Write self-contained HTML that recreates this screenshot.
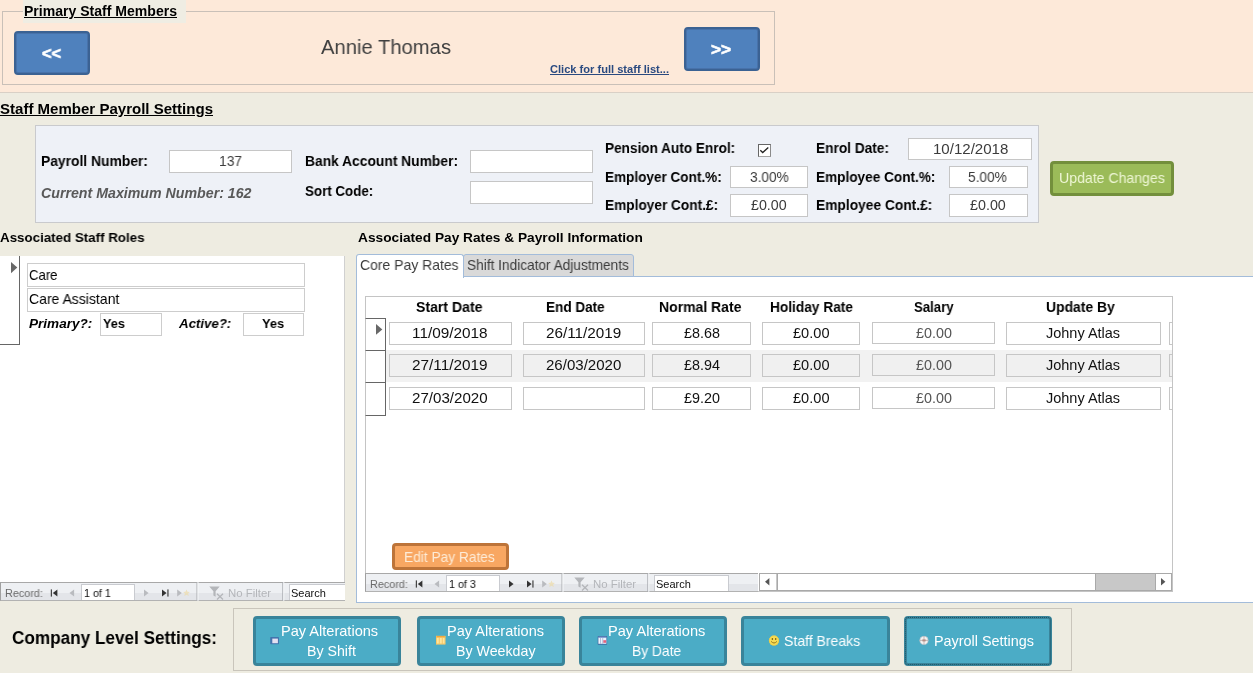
<!DOCTYPE html>
<html><head><meta charset="utf-8"><title>Payroll</title>
<style>
html,body{margin:0;padding:0;}
body{width:1253px;height:673px;overflow:hidden;background:#eeece1;position:relative;font-family:"Liberation Sans", sans-serif;}
.b{position:absolute;box-sizing:border-box;}
.t{position:absolute;white-space:pre;transform-origin:0 0;line-height:normal;font-family:"Liberation Sans", sans-serif;will-change:transform;}
svg{position:absolute;overflow:visible;}
</style></head><body>
<div class="b" style="left:0px;top:0px;width:1253px;height:92px;background:#fde9d9;"></div>
<div class="b" style="left:0px;top:92px;width:1253px;height:1px;background:#d9d0c6;"></div>
<div class="b" style="left:2px;top:11px;width:773px;height:74px;border:1px solid #c9c0b8;"></div>
<div class="b" style="left:23px;top:0px;width:163px;height:23px;background:#efede3;"></div>
<div class="b" style="left:14px;top:31px;width:76px;height:44px;background:#4f81bd;border:2px solid #3b6293;border-radius:4px;box-shadow:inset 0 0 0 1px #4872aa;"></div>
<div class="b" style="left:684px;top:27px;width:76px;height:44px;background:#4f81bd;border:2px solid #3b6293;border-radius:4px;box-shadow:inset 0 0 0 1px #4872aa;"></div>
<div class="b" style="left:35px;top:125px;width:1004px;height:98px;background:#eef1f7;border:1px solid #c9cacd;"></div>
<div class="b" style="left:169px;top:150px;width:123px;height:23px;background:#fff;border:1px solid #c6c6c6;"></div>
<div class="b" style="left:470px;top:150px;width:123px;height:23px;background:#fff;border:1px solid #c6c6c6;"></div>
<div class="b" style="left:470px;top:181px;width:123px;height:23px;background:#fff;border:1px solid #c6c6c6;"></div>
<div class="b" style="left:758px;top:144px;width:13px;height:13px;background:#fff;border:1px solid #666;border-bottom-color:#a5a5a5;border-right-color:#8a8a8a;"></div>
<svg style="left:758px;top:144px" width="13" height="13"><path d="M2.3 6.2 L4.7 8.5 L10.3 3.5" fill="none" stroke="#222" stroke-width="1.3"/></svg>
<div class="b" style="left:730px;top:166px;width:78px;height:22px;background:#fff;border:1px solid #c6c6c6;"></div>
<div class="b" style="left:730px;top:194px;width:78px;height:23px;background:#fff;border:1px solid #c6c6c6;"></div>
<div class="b" style="left:908px;top:138px;width:124px;height:22px;background:#fff;border:1px solid #c6c6c6;"></div>
<div class="b" style="left:949px;top:166px;width:79px;height:22px;background:#fff;border:1px solid #c6c6c6;"></div>
<div class="b" style="left:949px;top:194px;width:79px;height:23px;background:#fff;border:1px solid #c6c6c6;"></div>
<div class="b" style="left:1050px;top:161px;width:124px;height:35px;background:#9bbb59;border:3px solid #738f3c;border-radius:4px;"></div>
<div class="b" style="left:0px;top:256px;width:345px;height:345px;background:#fff;"></div>
<div class="b" style="left:344px;top:256px;width:1px;height:345px;background:#d0d0d0;"></div>
<div class="b" style="left:0px;top:256px;width:20px;height:89px;background:#fff;border-right:1px solid #666;border-bottom:1px solid #666;"></div>
<svg style="left:11px;top:262px" width="7" height="12"><path d="M0 0 L6.3 5.6 L0 11.2 Z" fill="#686868"/></svg>
<div class="b" style="left:27px;top:263px;width:278px;height:24px;background:#fff;border:1px solid #cdcdcd;"></div>
<div class="b" style="left:27px;top:288px;width:278px;height:24px;background:#fff;border:1px solid #cdcdcd;"></div>
<div class="b" style="left:100px;top:313px;width:62px;height:23px;background:#fff;border:1px solid #cdcdcd;"></div>
<div class="b" style="left:243px;top:313px;width:61px;height:23px;background:#fff;border:1px solid #cdcdcd;"></div>
<div class="b" style="left:0px;top:582px;width:345px;height:19px;background:#e3e5e9;border-top:1px solid #a8a8a8;border-left:1px solid #a0a0a0;border-bottom:1px solid #b2b2b2;"></div>
<div class="b" style="left:1px;top:583px;width:344px;height:10px;background:#eef0f3;"></div>
<svg style="left:0px;top:582px" width="345" height="19"><rect x="50.8" y="7.4" width="1.1" height="7.2" fill="#333"/><path d="M57.4 7.4 L52.8 11.0 L57.4 14.6 Z" fill="#333"/><path d="M74.1 7.4 L69.5 11.0 L74.1 14.6 Z" fill="#b9bbbf"/><path d="M144 7.4 L148.6 11.0 L144 14.6 Z" fill="#b9bbbf"/><path d="M162 7.4 L166.6 11.0 L162 14.6 Z" fill="#333"/><rect x="167.4" y="7.4" width="1.1" height="7.2" fill="#333"/><path d="M177.2 7.4 L181.79999999999998 11.0 L177.2 14.6 Z" fill="#b9bbbf"/><path d="M186.5 7.5 l1 2.3 2.4 .2 -1.8 1.6 .6 2.4 -2.2 -1.3 -2.2 1.3 .6 -2.4 -1.8 -1.6 2.4 -.2z" fill="#ecdcae" opacity=".75"/><rect x="196.5" y="0" width="1" height="19" fill="#a9abb0"/><rect x="197.5" y="0" width="1" height="19" fill="#f6f7f9"/><rect x="282.3" y="0" width="1" height="19" fill="#a9abb0"/><rect x="283.3" y="0" width="1" height="19" fill="#f6f7f9"/><path d="M209.3 4.6 h10.4 l-4.1 4.6 v5.6 l-2.2 -1.4 v-4.2 z" fill="#b4b6ba"/><path d="M217 11.8 l6 5.6 M223 11.8 l-6 5.6" stroke="#b4b6ba" stroke-width="1.3" fill="none"/></svg>
<div class="b" style="left:81px;top:584px;width:54px;height:16px;background:#fff;border:1px solid #c9cbd0;border-bottom:none;"></div>
<div class="b" style="left:289px;top:584px;width:56px;height:16px;background:#fff;border:1px solid #c9cbd0;border-bottom:none;border-right:none;"></div>
<div class="b" style="left:356px;top:276px;width:904px;height:327px;background:#fff;border:1px solid #a3bcda;"></div>
<div class="b" style="left:463px;top:254px;width:171px;height:23px;background:#d9d9d9;border:1px solid #a3bcda;border-radius:3px 3px 0 0;"></div>
<div class="b" style="left:356px;top:254px;width:108px;height:24px;background:#fff;border:1px solid #a3bcda;border-bottom:none;border-radius:3px 3px 0 0;"></div>
<div class="b" style="left:365px;top:296px;width:808px;height:296px;background:#fff;border:1px solid #c4c4c4;"></div>
<div class="b" style="left:366px;top:350px;width:806px;height:32px;background:#f2f2f2;"></div>
<div class="b" style="left:389px;top:322px;width:123px;height:23px;background:#fff;border:1px solid #c6c6c6;"></div>
<div class="b" style="left:523px;top:322px;width:122px;height:23px;background:#fff;border:1px solid #c6c6c6;"></div>
<div class="b" style="left:652px;top:322px;width:99px;height:23px;background:#fff;border:1px solid #c6c6c6;"></div>
<div class="b" style="left:762px;top:322px;width:98px;height:23px;background:#fff;border:1px solid #c6c6c6;"></div>
<div class="b" style="left:872px;top:322px;width:123px;height:22px;background:#fff;border:1px solid #c6c6c6;"></div>
<div class="b" style="left:1006px;top:322px;width:155px;height:23px;background:#fff;border:1px solid #c6c6c6;"></div>
<div class="b" style="left:1169px;top:322px;width:3px;height:23px;background:#fff;border:1px solid #c6c6c6;border-right:none;"></div>
<div class="b" style="left:365px;top:318px;width:21px;height:33px;background:#fff;border:1px solid #666;border-left:1px solid #c4c4c4;"></div>
<div class="b" style="left:389px;top:354px;width:123px;height:23px;background:#f0f0f0;border:1px solid #c6c6c6;"></div>
<div class="b" style="left:523px;top:354px;width:122px;height:23px;background:#f0f0f0;border:1px solid #c6c6c6;"></div>
<div class="b" style="left:652px;top:354px;width:99px;height:23px;background:#f0f0f0;border:1px solid #c6c6c6;"></div>
<div class="b" style="left:762px;top:354px;width:98px;height:23px;background:#f0f0f0;border:1px solid #c6c6c6;"></div>
<div class="b" style="left:872px;top:354px;width:123px;height:22px;background:#f0f0f0;border:1px solid #c6c6c6;"></div>
<div class="b" style="left:1006px;top:354px;width:155px;height:23px;background:#f0f0f0;border:1px solid #c6c6c6;"></div>
<div class="b" style="left:1169px;top:354px;width:3px;height:23px;background:#f0f0f0;border:1px solid #c6c6c6;border-right:none;"></div>
<div class="b" style="left:365px;top:350px;width:21px;height:33px;background:#fff;border:1px solid #666;border-left:1px solid #c4c4c4;"></div>
<div class="b" style="left:389px;top:387px;width:123px;height:23px;background:#fff;border:1px solid #c6c6c6;"></div>
<div class="b" style="left:523px;top:387px;width:122px;height:23px;background:#fff;border:1px solid #c6c6c6;"></div>
<div class="b" style="left:652px;top:387px;width:99px;height:23px;background:#fff;border:1px solid #c6c6c6;"></div>
<div class="b" style="left:762px;top:387px;width:98px;height:23px;background:#fff;border:1px solid #c6c6c6;"></div>
<div class="b" style="left:872px;top:387px;width:123px;height:22px;background:#fff;border:1px solid #c6c6c6;"></div>
<div class="b" style="left:1006px;top:387px;width:155px;height:23px;background:#fff;border:1px solid #c6c6c6;"></div>
<div class="b" style="left:1169px;top:387px;width:3px;height:23px;background:#fff;border:1px solid #c6c6c6;border-right:none;"></div>
<div class="b" style="left:365px;top:382px;width:21px;height:34px;background:#fff;border:1px solid #666;border-left:1px solid #c4c4c4;"></div>
<svg style="left:376px;top:324px" width="7" height="12"><path d="M0 0 L6.3 5.4 L0 10.8 Z" fill="#686868"/></svg>
<div class="b" style="left:392px;top:543px;width:117px;height:27px;background:#f8a762;border:3px solid #bd7439;border-radius:4px;"></div>
<div class="b" style="left:365px;top:573px;width:393px;height:19px;background:#e3e5e9;border-top:1px solid #a8a8a8;border-left:1px solid #a0a0a0;border-bottom:1px solid #b2b2b2;"></div>
<div class="b" style="left:366px;top:574px;width:392px;height:10px;background:#eef0f3;"></div>
<svg style="left:365px;top:573px" width="393" height="19"><rect x="50.8" y="7.4" width="1.1" height="7.2" fill="#333"/><path d="M57.4 7.4 L52.8 11.0 L57.4 14.6 Z" fill="#333"/><path d="M74.1 7.4 L69.5 11.0 L74.1 14.6 Z" fill="#b9bbbf"/><path d="M144 7.4 L148.6 11.0 L144 14.6 Z" fill="#333"/><path d="M162 7.4 L166.6 11.0 L162 14.6 Z" fill="#333"/><rect x="167.4" y="7.4" width="1.1" height="7.2" fill="#333"/><path d="M177.2 7.4 L181.79999999999998 11.0 L177.2 14.6 Z" fill="#b9bbbf"/><path d="M186.5 7.5 l1 2.3 2.4 .2 -1.8 1.6 .6 2.4 -2.2 -1.3 -2.2 1.3 .6 -2.4 -1.8 -1.6 2.4 -.2z" fill="#ecdcae" opacity=".75"/><rect x="196.5" y="0" width="1" height="19" fill="#a9abb0"/><rect x="197.5" y="0" width="1" height="19" fill="#f6f7f9"/><rect x="282.3" y="0" width="1" height="19" fill="#a9abb0"/><rect x="283.3" y="0" width="1" height="19" fill="#f6f7f9"/><path d="M209.3 4.6 h10.4 l-4.1 4.6 v5.6 l-2.2 -1.4 v-4.2 z" fill="#b4b6ba"/><path d="M217 11.8 l6 5.6 M223 11.8 l-6 5.6" stroke="#b4b6ba" stroke-width="1.3" fill="none"/></svg>
<div class="b" style="left:446px;top:575px;width:54px;height:16px;background:#fff;border:1px solid #c9cbd0;border-bottom:none;"></div>
<div class="b" style="left:654px;top:575px;width:75px;height:16px;background:#fff;border:1px solid #c9cbd0;border-bottom:none;"></div>
<div class="b" style="left:759px;top:573px;width:413px;height:18px;background:#c8c8c8;border:1px solid #a9a9a9;"></div>
<div class="b" style="left:760px;top:574px;width:16px;height:16px;background:#fff;"></div>
<div class="b" style="left:777px;top:574px;width:319px;height:16px;background:#fff;border-left:1px solid #a9a9a9;border-right:1px solid #a9a9a9;"></div>
<div class="b" style="left:1155px;top:574px;width:16px;height:16px;background:#fff;border-left:1px solid #a9a9a9;"></div>
<svg style="left:765px;top:578px" width="6" height="10"><path d="M4.4 0 L0 3.8 L4.4 7.6 Z" fill="#555"/></svg>
<svg style="left:1161.2px;top:578px" width="6" height="10"><path d="M0 0 L4.4 3.8 L0 7.6 Z" fill="#555"/></svg>
<div class="b" style="left:233px;top:608px;width:839px;height:63px;border:1px solid #c9c5bb;"></div>
<div class="b" style="left:253px;top:616px;width:148px;height:50px;background:#4bacc6;border:3px solid #39849a;border-radius:4px;"></div>
<div class="b" style="left:417px;top:616px;width:148px;height:50px;background:#4bacc6;border:3px solid #39849a;border-radius:4px;"></div>
<div class="b" style="left:579px;top:616px;width:148px;height:50px;background:#4bacc6;border:3px solid #39849a;border-radius:4px;"></div>
<div class="b" style="left:741px;top:616px;width:149px;height:50px;background:#4bacc6;border:3px solid #39849a;border-radius:4px;"></div>
<div class="b" style="left:904px;top:616px;width:148px;height:50px;background:#4bacc6;border:3px solid #39849a;border-radius:4px;outline:1px dotted #1d5466;outline-offset:-2px;"></div>
<svg style="left:0;top:0" width="1253" height="673"><rect x="270.2" y="636.9" width="8.8" height="7.4" rx="0.8" fill="#4274ad"/><rect x="272.3" y="638.6" width="5.6" height="4.6" fill="#e4e0f1"/><rect x="436" y="635.9" width="9.3" height="8.4" fill="#ffe69c"/><rect x="436" y="635.9" width="9.3" height="1.7" fill="#f2a73a"/><rect x="436" y="643.6" width="9.3" height="0.8" fill="#f6bd55"/><rect x="436" y="635.9" width="0.7" height="8.4" fill="#f6bd55"/><rect x="444.6" y="635.9" width="0.7" height="8.4" fill="#f6bd55"/><rect x="438.8" y="637.6" width="0.9" height="6.4" fill="#f5c364"/><rect x="441.8" y="637.6" width="0.9" height="6.4" fill="#f5c364"/><rect x="597.7" y="635.9" width="9.4" height="8.8" rx="0.8" fill="#3f69a3"/><rect x="598.4" y="637.6" width="8" height="6.2" fill="#eef3fb"/><rect x="598.4" y="636.7" width="8" height="1.2" fill="#8aa3d6"/><rect x="600.2" y="638" width="0.8" height="5.8" fill="#9fb2d8"/><rect x="602.4" y="638" width="0.8" height="5.8" fill="#9fb2d8"/><rect x="603.3" y="640.2" width="2.8" height="2.6" fill="#e2627c"/><circle cx="774" cy="640.6" r="5" fill="#f6dc55"/><circle cx="774" cy="640.6" r="4.7" fill="none" stroke="#efc93a" stroke-width="0.6"/><ellipse cx="772.4" cy="639" rx="0.75" ry="1.1" fill="#7d5f10"/><ellipse cx="775.7" cy="639" rx="0.75" ry="1.1" fill="#7d5f10"/><path d="M771.1 641.4 Q774 644.6 776.9 641.4" fill="none" stroke="#8f6e14" stroke-width="0.9"/><circle cx="924" cy="640.4" r="4.3" fill="#f4f1f0"/><path d="M919.7 640.4 h8.6 M924 636.1 v8.6" stroke="#b9aaa8" stroke-width="0.8"/><circle cx="924" cy="640.4" r="4.1" fill="none" stroke="#9fb4bd" stroke-width="0.6"/><rect x="922.4" y="639.4" width="3.2" height="2" fill="#b48d84"/></svg>
<span class="t" style="left:24.00px;top:3px;font-size:14px;color:#000;transform:scaleX(1.0032);font-weight:bold;text-decoration:underline;">Primary Staff Members</span>
<span class="t" style="left:42.00px;top:44px;font-size:17px;color:#fff;transform:scaleX(0.9567);font-weight:bold;-webkit-text-stroke:0.6px #fff;">&lt;&lt;</span>
<span class="t" style="left:711.00px;top:40px;font-size:17px;color:#fff;transform:scaleX(1.0071);font-weight:bold;-webkit-text-stroke:0.6px #fff;">&gt;&gt;</span>
<span class="t" style="left:321.00px;top:36px;font-size:20.4px;color:#404040;transform:scaleX(0.9915);">Annie Thomas</span>
<span class="t" style="left:550.00px;top:63px;font-size:10.5px;color:#2a4a80;transform:scaleX(1.0568);font-weight:bold;text-decoration:underline;">Click for full staff list...</span>
<span class="t" style="left:0.00px;top:101px;font-size:14.2px;color:#000;transform:scaleX(1.0595);font-weight:bold;text-decoration:underline;">Staff Member Payroll Settings</span>
<span class="t" style="left:41.00px;top:153px;font-size:14.2px;color:#000;transform:scaleX(0.9763);font-weight:bold;">Payroll Number:</span>
<span class="t" style="left:219.00px;top:153px;font-size:14.2px;color:#3c3c3c;transform:scaleX(0.9716);">137</span>
<span class="t" style="left:41.00px;top:185px;font-size:14.2px;color:#595959;transform:scaleX(1.0000);font-weight:bold;font-style:italic;">Current Maximum Number: 162</span>
<span class="t" style="left:304.80px;top:153px;font-size:14.2px;color:#000;transform:scaleX(0.9737);font-weight:bold;">Bank Account Number:</span>
<span class="t" style="left:304.80px;top:183px;font-size:14.2px;color:#000;transform:scaleX(0.9405);font-weight:bold;">Sort Code:</span>
<span class="t" style="left:605.20px;top:140px;font-size:14.2px;color:#000;transform:scaleX(0.9586);font-weight:bold;">Pension Auto Enrol:</span>
<span class="t" style="left:605.20px;top:169px;font-size:14.2px;color:#000;transform:scaleX(0.9551);font-weight:bold;">Employer Cont.%:</span>
<span class="t" style="left:605.20px;top:197px;font-size:14.2px;color:#000;transform:scaleX(0.9628);font-weight:bold;">Employer Cont.£:</span>
<span class="t" style="left:749.50px;top:169px;font-size:14.2px;color:#3c3c3c;transform:scaleX(0.9643);">3.00%</span>
<span class="t" style="left:751.30px;top:197px;font-size:14.2px;color:#3c3c3c;transform:scaleX(1.0052);">£0.00</span>
<span class="t" style="left:816.40px;top:140px;font-size:14.2px;color:#000;transform:scaleX(0.9645);font-weight:bold;">Enrol Date:</span>
<span class="t" style="left:816.40px;top:169px;font-size:14.2px;color:#000;transform:scaleX(0.9586);font-weight:bold;">Employee Cont.%:</span>
<span class="t" style="left:816.40px;top:197px;font-size:14.2px;color:#000;transform:scaleX(0.9706);font-weight:bold;">Employee Cont.£:</span>
<span class="t" style="left:932.70px;top:141px;font-size:14.2px;color:#3c3c3c;transform:scaleX(1.0603);">10/12/2018</span>
<span class="t" style="left:968.40px;top:169px;font-size:14.2px;color:#3c3c3c;transform:scaleX(0.9668);">5.00%</span>
<span class="t" style="left:970.20px;top:197px;font-size:14.2px;color:#3c3c3c;transform:scaleX(1.0080);">£0.00</span>
<span class="t" style="left:1059.00px;top:170px;font-size:14.2px;color:#eff7d6;transform:scaleX(0.9936);">Update Changes</span>
<span class="t" style="left:0.00px;top:230px;font-size:13.4px;color:#000;transform:scaleX(0.9958);font-weight:bold;">Associated Staff Roles</span>
<span class="t" style="left:29.00px;top:267px;font-size:14.2px;color:#000;transform:scaleX(0.9264);">Care</span>
<span class="t" style="left:29.00px;top:291px;font-size:14.2px;color:#000;transform:scaleX(0.9871);">Care Assistant</span>
<span class="t" style="left:28.70px;top:316px;font-size:13.4px;color:#000;transform:scaleX(1.0125);font-weight:bold;font-style:italic;">Primary?:</span>
<span class="t" style="left:102.60px;top:316px;font-size:13.4px;color:#000;transform:scaleX(0.9440);font-weight:bold;">Yes</span>
<span class="t" style="left:179.00px;top:316px;font-size:13.4px;color:#000;transform:scaleX(0.9897);font-weight:bold;font-style:italic;">Active?:</span>
<span class="t" style="left:262.40px;top:316px;font-size:13.4px;color:#000;transform:scaleX(0.9570);font-weight:bold;">Yes</span>
<span class="t" style="left:5.20px;top:587px;font-size:11px;color:#6a6a6a;transform:scaleX(0.9836);">Record:</span>
<span class="t" style="left:83.80px;top:587px;font-size:11px;color:#111;transform:scaleX(0.9734);">1 of 1</span>
<span class="t" style="left:227.50px;top:587px;font-size:11px;color:#b4b6ba;transform:scaleX(1.0370);">No Filter</span>
<span class="t" style="left:290.70px;top:587px;font-size:11px;color:#111;transform:scaleX(0.9897);">Search</span>
<span class="t" style="left:357.80px;top:230px;font-size:13.4px;color:#000;transform:scaleX(1.0233);font-weight:bold;">Associated Pay Rates &amp; Payroll Information</span>
<span class="t" style="left:360.10px;top:257px;font-size:14.5px;color:#3c3c3c;transform:scaleX(0.9633);">Core Pay Rates</span>
<span class="t" style="left:467.00px;top:257px;font-size:14.5px;color:#3c3c3c;transform:scaleX(0.9425);">Shift Indicator Adjustments</span>
<span class="t" style="left:416.40px;top:299px;font-size:14.2px;color:#000;transform:scaleX(0.9906);font-weight:bold;">Start Date</span>
<span class="t" style="left:546.30px;top:299px;font-size:14.2px;color:#000;transform:scaleX(0.9545);font-weight:bold;">End Date</span>
<span class="t" style="left:658.70px;top:299px;font-size:14.2px;color:#000;transform:scaleX(0.9859);font-weight:bold;">Normal Rate</span>
<span class="t" style="left:769.90px;top:299px;font-size:14.2px;color:#000;transform:scaleX(0.9658);font-weight:bold;">Holiday Rate</span>
<span class="t" style="left:913.60px;top:299px;font-size:14.2px;color:#000;transform:scaleX(0.9294);font-weight:bold;">Salary</span>
<span class="t" style="left:1045.60px;top:299px;font-size:14.2px;color:#000;transform:scaleX(0.9804);font-weight:bold;">Update By</span>
<span class="t" style="left:412.40px;top:325px;font-size:14.2px;color:#111;transform:scaleX(1.0807);">11/09/2018</span>
<span class="t" style="left:546.30px;top:325px;font-size:14.2px;color:#111;transform:scaleX(1.0764);">26/11/2019</span>
<span class="t" style="left:683.70px;top:325px;font-size:14.2px;color:#111;transform:scaleX(1.0108);">£8.68</span>
<span class="t" style="left:793.20px;top:325px;font-size:14.2px;color:#111;transform:scaleX(1.0277);">£0.00</span>
<span class="t" style="left:915.90px;top:325px;font-size:14.2px;color:#555;transform:scaleX(1.0108);">£0.00</span>
<span class="t" style="left:1046.20px;top:325px;font-size:14.2px;color:#111;transform:scaleX(1.0212);">Johny Atlas</span>
<span class="t" style="left:412.40px;top:357px;font-size:14.2px;color:#111;transform:scaleX(1.0807);">27/11/2019</span>
<span class="t" style="left:546.30px;top:357px;font-size:14.2px;color:#111;transform:scaleX(1.0603);">26/03/2020</span>
<span class="t" style="left:683.70px;top:357px;font-size:14.2px;color:#111;transform:scaleX(1.0108);">£8.94</span>
<span class="t" style="left:793.20px;top:357px;font-size:14.2px;color:#111;transform:scaleX(1.0277);">£0.00</span>
<span class="t" style="left:915.90px;top:357px;font-size:14.2px;color:#555;transform:scaleX(1.0108);">£0.00</span>
<span class="t" style="left:1046.20px;top:357px;font-size:14.2px;color:#111;transform:scaleX(1.0212);">Johny Atlas</span>
<span class="t" style="left:412.40px;top:390px;font-size:14.2px;color:#111;transform:scaleX(1.0646);">27/03/2020</span>
<span class="t" style="left:683.70px;top:390px;font-size:14.2px;color:#111;transform:scaleX(1.0108);">£9.20</span>
<span class="t" style="left:793.20px;top:390px;font-size:14.2px;color:#111;transform:scaleX(1.0277);">£0.00</span>
<span class="t" style="left:915.90px;top:390px;font-size:14.2px;color:#555;transform:scaleX(1.0108);">£0.00</span>
<span class="t" style="left:1046.20px;top:390px;font-size:14.2px;color:#111;transform:scaleX(1.0212);">Johny Atlas</span>
<span class="t" style="left:404.40px;top:549px;font-size:14.2px;color:#fdecd8;transform:scaleX(0.9676);">Edit Pay Rates</span>
<span class="t" style="left:370.20px;top:578px;font-size:11px;color:#6a6a6a;transform:scaleX(0.9836);">Record:</span>
<span class="t" style="left:448.80px;top:578px;font-size:11px;color:#111;transform:scaleX(0.9734);">1 of 3</span>
<span class="t" style="left:592.50px;top:578px;font-size:11px;color:#b4b6ba;transform:scaleX(1.0370);">No Filter</span>
<span class="t" style="left:655.70px;top:578px;font-size:11px;color:#111;transform:scaleX(0.9897);">Search</span>
<span class="t" style="left:12.00px;top:628px;font-size:18px;color:#000;transform:scaleX(0.9533);font-weight:bold;">Company Level Settings:</span>
<span class="t" style="left:280.90px;top:623px;font-size:14.2px;color:#fff;transform:scaleX(1.0260);">Pay Alterations</span>
<span class="t" style="left:307.00px;top:643px;font-size:14.2px;color:#fff;transform:scaleX(0.9941);">By Shift</span>
<span class="t" style="left:447.00px;top:623px;font-size:14.2px;color:#fff;transform:scaleX(1.0249);">Pay Alterations</span>
<span class="t" style="left:456.00px;top:643px;font-size:14.2px;color:#fff;transform:scaleX(1.0014);">By Weekday</span>
<span class="t" style="left:608.20px;top:623px;font-size:14.2px;color:#fff;transform:scaleX(1.0292);">Pay Alterations</span>
<span class="t" style="left:632.40px;top:643px;font-size:14.2px;color:#fff;transform:scaleX(0.9729);">By Date</span>
<span class="t" style="left:784.00px;top:633px;font-size:14.2px;color:#fff;transform:scaleX(0.9892);">Staff Breaks</span>
<span class="t" style="left:934.00px;top:633px;font-size:14.2px;color:#fff;transform:scaleX(1.0144);">Payroll Settings</span>
</body></html>
